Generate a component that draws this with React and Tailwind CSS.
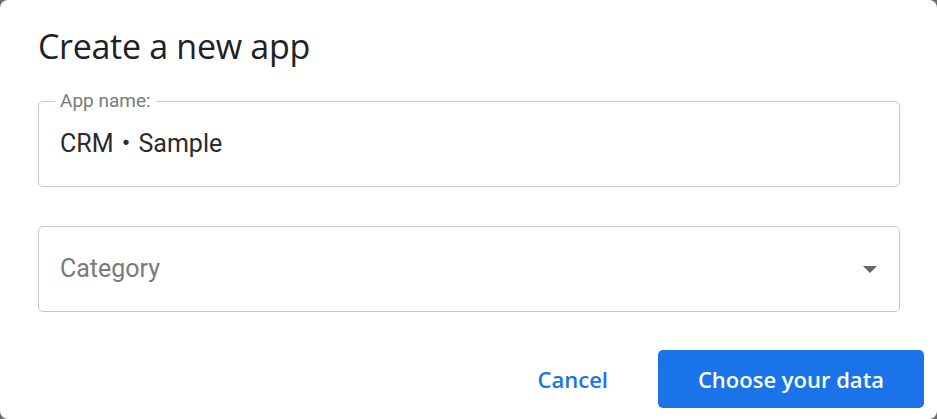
import React from "react";

function Field({ label, children }) {
  return (
    <div className="relative h-[86px] rounded-[5px] border border-[#c8c8c8] flex items-center px-[21px]">
      {label && (
        <span className="absolute left-[16px] top-[-13px] bg-white px-[5px] text-[19px] text-[#7a7a7a] leading-[24px]">
          {label}
        </span>
      )}
      {children}
    </div>
  );
}

export default function App() {
  return (
    <div className="w-[937px] h-[419px] bg-[#6b6b6b] font-['Roboto','Noto_Sans_CJK_JP',sans-serif]">
      <div className="w-full h-full bg-white rounded-[8px] px-[38px] pt-[24px] flex flex-col">
        <h1 className="font-['Open_Sans',sans-serif] text-[34px] leading-[44px] text-[#202124] tracking-[-0.3px]">
          Create a new app
        </h1>
        <div className="mt-[33px] w-[862px] flex flex-col gap-[39px]">
          <Field label="App name:">
            <span className="text-[25px] text-[#2b2b2b]">CRM・Sample</span>
          </Field>
          <Field>
            <span className="text-[25px] text-[#7a7a7a]">Category</span>
            <span className="ml-auto mr-[1px] w-0 h-0 border-l-[7px] border-r-[7px] border-t-[7px] border-l-transparent border-r-transparent border-t-[#666]" />
          </Field>
        </div>
        <div className="mt-[38px] flex items-center justify-end gap-[50px] mr-[-25px]">
          <button className="font-['Open_Sans',sans-serif] text-[22px] font-semibold text-[#1a73e8]">
            Cancel
          </button>
          <button className="w-[266px] h-[58px] rounded-[5px] bg-[#1a73e8] font-['Open_Sans',sans-serif] text-[22px] font-semibold text-white">
            Choose your data
          </button>
        </div>
      </div>
    </div>
  );
}
